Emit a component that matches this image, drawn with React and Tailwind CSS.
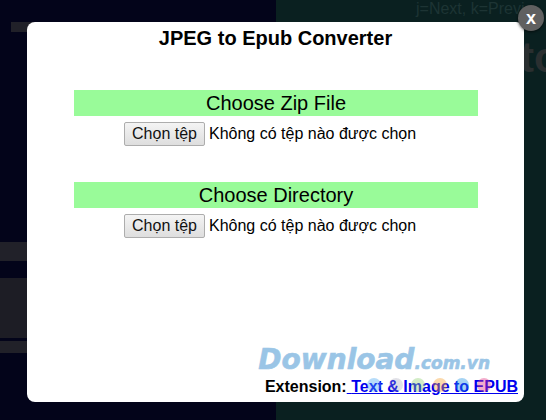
import React from "react";

const sans = { fontFamily: '"Liberation Sans", Arial, sans-serif' };
const mark = { fontFamily: '"DejaVu Sans", Verdana, sans-serif' };

function PickFile() {
  return (
    <div className="mt-[6px] flex h-[24px] items-center justify-center pr-[12px] text-[16px] text-black">
      <button className="h-[24px] w-[81px] rounded-[2px] border border-[#adadad] bg-gradient-to-b from-[#f4f4f4] to-[#dedede] text-[16px] leading-none text-[#111]">
        Chọn tệp
      </button>
      <span className="ml-[4px] w-[207px] whitespace-nowrap">Không có tệp nào được chọn</span>
    </div>
  );
}

function Section({ title }) {
  return (
    <div className="h-[92px]">
      <div className="h-[26px] bg-[#99fb99] text-center text-[20px] leading-[26px] text-black">{title}</div>
      <PickFile />
    </div>
  );
}

export default function App() {
  return (
    <div className="relative flex h-[420px] w-[546px] overflow-hidden" style={sans}>
      {/* page behind the dialog */}
      <div className="flex w-[276px] flex-col bg-[#03041a]">
        <div className="ml-[11px] mt-[22px] h-[10px] w-[40px] bg-[#212129]" />
        <div className="mt-[210px] h-[19px] w-full bg-[#212129]" />
        <div className="mt-[17px] h-[60px] w-full bg-[#1d1d25]" />
        <div className="mt-[3px] h-[12px] w-full bg-[#212129]" />
      </div>
      <div className="flex flex-1 flex-col overflow-hidden bg-[#0a2020]">
        <div className="ml-[140px] mt-[-1px] whitespace-nowrap text-[16px] leading-[20px] text-[#1d3434]">
          j=Next, k=Previ
        </div>
        <div className="ml-[244px] mt-[15px] whitespace-nowrap text-[42px] font-bold leading-[48px] text-[#2a2f30]">
          to
        </div>
      </div>

      {/* dialog */}
      <div className="absolute left-[27px] top-[22px] flex h-[380px] w-[497px] flex-col rounded-[8px] bg-white">
        <h1 className="pt-[3px] text-center text-[20px] font-bold leading-[26px] text-black">JPEG to Epub Converter</h1>
        <div className="mx-[47px] mt-[39px] w-[404px]">
          <Section title="Choose Zip File" />
          <Section title="Choose Directory" />
        </div>

        <div className="mt-auto flex flex-col items-end pb-[6px] pr-[6px]">
          <div
            className="mr-[28px] whitespace-nowrap text-[28px] font-bold italic leading-[30px] text-[#9ac5e6] [-webkit-text-stroke:0.6px_#9ac5e6]"
            style={mark}
          >
            Download<span className="text-[17px]">.com.vn</span>
          </div>
          <div className="whitespace-nowrap text-[16px] font-bold leading-[18px] text-black">
            Extension:
            <a href="#" className="relative text-[#0000ee] underline">
              {" "}Text &amp; Image to EPUB
              <span className="absolute left-[20px] top-0 flex gap-[8px]">
                <span className="h-[14px] w-[14px] rounded-full bg-[#4aa8f0]/40" />
                <span className="h-[14px] w-[14px] rounded-full bg-[#9a9ab0]/30" />
                <span className="h-[14px] w-[14px] rounded-full bg-[#8fd070]/40" />
                <span className="h-[14px] w-[14px] rounded-full bg-[#f5a030]/40" />
                <span className="h-[14px] w-[14px] rounded-full bg-[#2090e0]/40" />
                <span className="h-[14px] w-[14px] rounded-full bg-[#e03080]/40" />
              </span>
            </a>
          </div>
        </div>
      </div>

      {/* close button */}
      <button className="absolute left-[518px] top-[5px] h-[26px] w-[26px] rounded-full bg-[#606060] text-center text-[18px] font-bold leading-[23px] text-white shadow-[0_1px_3px_rgba(0,0,0,0.6)]">
        x
      </button>
    </div>
  );
}
